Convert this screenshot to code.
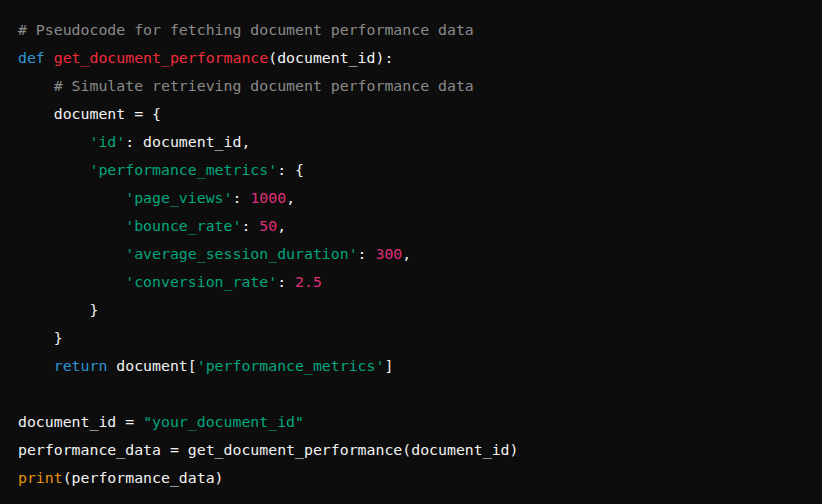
type Tok = [string, string];

const C = 'text-[#8a8a8a]';
const K = 'text-[#2e95d3]';
const F = 'text-[#f22c3d]';
const S = 'text-[#00a67d]';
const N = 'text-[#df3079]';
const B = 'text-[#e9950c]';
const T = 'text-[#f2f2f2]';

const LINES: Tok[][] = [
  [[C, '# Pseudocode for fetching document performance data']],
  [[K, 'def'], [T, ' '], [F, 'get_document_performance'], [T, '(document_id):']],
  [[T, '    '], [C, '# Simulate retrieving document performance data']],
  [[T, '    document = {']],
  [[T, '        '], [S, "'id'"], [T, ': document_id,']],
  [[T, '        '], [S, "'performance_metrics'"], [T, ': {']],
  [[T, '            '], [S, "'page_views'"], [T, ': '], [N, '1000'], [T, ',']],
  [[T, '            '], [S, "'bounce_rate'"], [T, ': '], [N, '50'], [T, ',']],
  [[T, '            '], [S, "'average_session_duration'"], [T, ': '], [N, '300'], [T, ',']],
  [[T, '            '], [S, "'conversion_rate'"], [T, ': '], [N, '2.5']],
  [[T, '        }']],
  [[T, '    }']],
  [[T, '    '], [K, 'return'], [T, ' document['], [S, "'performance_metrics'"], [T, ']']],
  [],
  [[T, 'document_id = '], [S, '"your_document_id"']],
  [[T, 'performance_data = get_document_performance(document_id)']],
  [[B, 'print'], [T, '(performance_data)']],
];

export default function App() {
  return (
    <div className="w-[822px] h-[504px] bg-[#0d0d0d] overflow-hidden">
      <pre className="px-[18px] pt-[16px] font-['DejaVu_Sans_Mono',monospace] text-[14.85px] leading-[28px] text-[#f2f2f2]">
        {LINES.map((line, i) => (
          <div key={i} className="h-[28px] whitespace-pre">
            {line.map(([cls, txt], j) => (
              <span key={j} className={cls}>
                {txt}
              </span>
            ))}
          </div>
        ))}
      </pre>
    </div>
  );
}
